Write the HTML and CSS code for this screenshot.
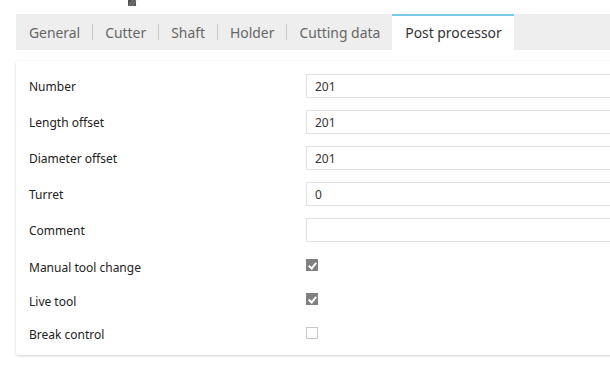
FILE: index.html
```html
<!DOCTYPE html>
<html lang="en">
<head>
    <meta charset="UTF-8">
    <meta name="viewport" content="width=device-width, initial-scale=1.0">
    <title>Tool - Post processor</title>
    <link rel="stylesheet" href="styles.css">
</head>
<body>

    <div class="top-strip">
        <svg class="tool-thumb" width="10" height="6" viewBox="0 0 10 6">
            <rect x="1" y="0" width="8" height="6" fill="#555"/>
            <path d="M2 6 L6 0 M5 6 L9 0" stroke="#888" stroke-width="1"/>
        </svg>
    </div>

    <div class="page">
        <div class="tabs">
            <div class="tab">General</div>
            <div class="tab">Cutter</div>
            <div class="tab">Shaft</div>
            <div class="tab">Holder</div>
            <div class="tab">Cutting data</div>
            <div class="tab active">Post processor</div>
        </div>

        <div class="panel">
            <div class="row">
                <label class="label">Number</label>
                <input class="field" type="text" value="201">
            </div>
            <div class="row">
                <label class="label">Length offset</label>
                <input class="field" type="text" value="201">
            </div>
            <div class="row">
                <label class="label">Diameter offset</label>
                <input class="field" type="text" value="201">
            </div>
            <div class="row">
                <label class="label">Turret</label>
                <input class="field" type="text" value="0">
            </div>
            <div class="row">
                <label class="label">Comment</label>
                <input class="field" type="text" value="">
            </div>
            <div class="row check-row">
                <label class="label">Manual tool change</label>
                <span class="checkbox checked"></span>
            </div>
            <div class="row check-row">
                <label class="label">Live tool</label>
                <span class="checkbox checked"></span>
            </div>
            <div class="row check-row last">
                <label class="label">Break control</label>
                <span class="checkbox"></span>
            </div>
        </div>
    </div>

</body>
</html>
```

FILE: styles.css
```css
body {
    margin: 0;
    padding: 0;
    background-color: #fff;
    color: #333;
    font-family: 'Noto Sans', 'Open Sans', sans-serif;
}

.top-strip {
    height: 14px;
    padding-left: 127px;
}

.tool-thumb {
    display: block;
}

/* the form is wider than the window, so clip it at the right edge */
.page {
    overflow: hidden;
    padding: 0 0 8px 16px;
}

/* Tab bar */
.tabs {
    display: flex;
    height: 36px;
    background-color: #eeeeee;
}

.tab {
    position: relative;
    display: flex;
    align-items: center;
    padding: 0 12px 0 13px;
    font-size: 13.9px;
    color: #666;
}

.tab + .tab::before {
    content: '';
    position: absolute;
    left: 0;
    top: 10px;
    height: 16px;
    border-left: 1px solid #c8c8c8;
}

.tab.active {
    background-color: #fff;
    color: #333;
    border-top: 2px solid #7ac8e8;
    padding-bottom: 2px;
}

.tab.active::before,
.tab.active + .tab::before {
    display: none;
}

/* Form panel */
.panel {
    margin-top: 11px;
    margin-right: -12px;
    padding: 7px 0 6px 13px;
    background-color: #fff;
    border-radius: 2px;
    box-shadow: 0 1px 3px rgba(0,0,0,0.18);
}

.row {
    display: grid;
    grid-template-columns: 277px 1fr;
    align-items: center;
    height: 36px;
}

.check-row {
    height: 34px;
}

.check-row.last {
    height: 33px;
}

.label {
    font-size: 12px;
    color: #222;
}

.check-row .label {
    padding-top: 4px;
}

.field {
    box-sizing: border-box;
    width: 100%;
    height: 24px;
    margin: 0;
    padding: 0 8px;
    border: 1px solid #e2e2e2;
    border-radius: 0;
    font-family: inherit;
    font-size: 12px;
    color: #333;
    outline: none;
}

.checkbox {
    display: block;
    box-sizing: border-box;
    width: 12px;
    height: 12px;
    border: 1px solid #c6c6c6;
    background-color: #fff;
}

.checkbox.checked {
    border-color: #808080;
    background-color: #808080;
    position: relative;
}

.checkbox.checked::after {
    content: '';
    position: absolute;
    left: 3px;
    top: 1px;
    width: 3px;
    height: 6px;
    border-right: 2px solid #fff;
    border-bottom: 2px solid #fff;
    transform: rotate(40deg);
}
```
